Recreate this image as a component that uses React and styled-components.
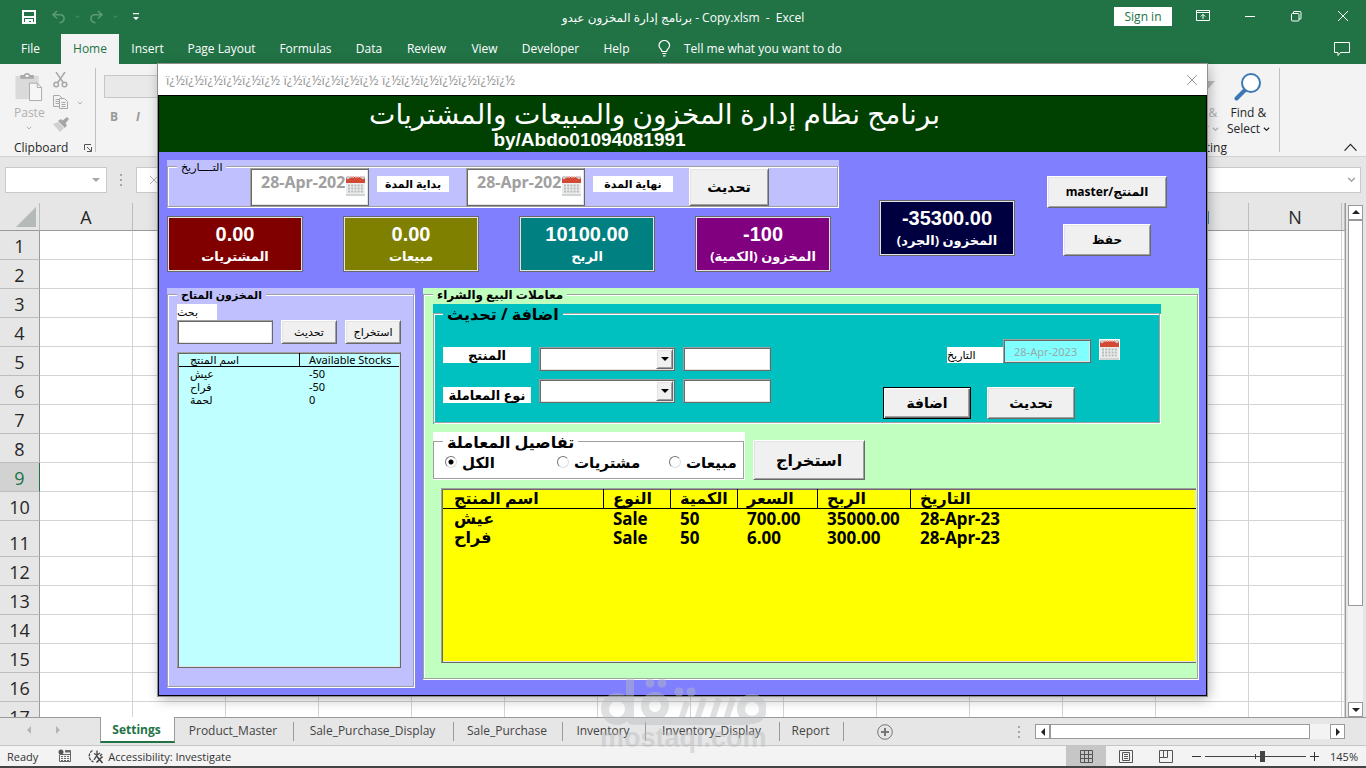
/* eslint-disable react/prop-types */
import { useState } from 'react'
import styled, { createGlobalStyle, css } from 'styled-components'

const GlobalStyle = createGlobalStyle`
  * {
    box-sizing: border-box;
  }
  html, body, #root {
    height: 100%;
  }
  body {
    margin: 0;
    overflow: hidden;
    font-family: "Open Sans", "Noto Sans", "DejaVu Sans", sans-serif;
    font-size: 12px;
    color: #262626;
  }
  button, input, select {
    font: inherit;
    color: inherit;
    margin: 0;
    border-radius: 0;
  }
  button {
    padding: 0;
    border: 0;
    background: none;
    white-space: nowrap;
  }
  svg {
    display: block;
    flex: none;
  }
`

const formFont = css`
  font-family: "Noto Sans", "DejaVu Sans", sans-serif;
`

const raised = css`
  background: #f0f0f0;
  border: 1px solid;
  border-color: #fff #696969 #696969 #fff;
  box-shadow: inset 1px 1px 0 #e3e3e3, inset -1px -1px 0 #a0a0a0;
`

const sunken = css`
  border: 1px solid;
  border-color: #a0a0a0 #696969 #696969 #a0a0a0;
  box-shadow: inset 1px 1px 0 #696969, inset -1px -1px 0 #e3e3e3;
`

/* ---------- workbook window ---------- */

const Window = styled.div`
  position: relative;
  height: 100%;
  display: flex;
  flex-direction: column;
  background: #e6e6e6;
  border-bottom: 2px solid #444;
`

const TitleBar = styled.header`
  display: grid;
  grid-template-columns: 1fr auto 1fr;
  align-items: center;
  height: 34px;
  flex: none;
  background: #217346;
  color: #fff;
`

const QuickAccess = styled.div`
  display: flex;
  align-items: center;
  gap: 9px;
  padding-left: 21px;
  color: #5c9a78;
  & button:first-child {
    color: #fff;
    margin-right: 5px;
  }
  & button:last-child {
    color: #fff;
    margin-left: 6px;
  }
`

const FileName = styled.div`
  white-space: pre;
`

const WindowButtons = styled.div`
  display: flex;
  justify-content: flex-end;
  align-items: center;
  padding: 0 17px 2px 0;
  gap: 35px;
`

const SignIn = styled.button`
  width: 58px;
  height: 19px;
  background: #fff;
  color: #217346;
  margin-right: -11px;
`

const RibbonTabs = styled.nav`
  display: flex;
  align-items: stretch;
  height: 30px;
  flex: none;
  background: #217346;
  color: #fff;
  padding-right: 15px;
`

const RibbonTab = styled.button`
  width: ${p => p.$w}px;
  padding-bottom: 1px;
  background: ${p => (p.$active ? '#f3f3f3' : 'transparent')};
  color: ${p => (p.$active ? '#217346' : '#fff')};
`

const TellMe = styled.button`
  display: flex;
  align-items: center;
  gap: 13px;
  padding: 0 0 1px 16px;
  margin-right: auto;
`

const Ribbon = styled.div`
  display: flex;
  height: 93px;
  flex: none;
  background: #f3f3f3;
  border-bottom: 1px solid #d2d2d2;
  color: #262626;
`

const RibbonGroup = styled.section`
  display: flex;
  flex-direction: column;
  justify-content: space-between;
  width: ${p => p.$w}px;
  margin: 4px 0;
  padding: 4px 0 0 14px;
  border-right: 1px solid #c0c0c0;
`

const GroupTools = styled.div`
  display: flex;
  gap: 8px;
  color: #a8a8a8;
`

const BigTool = styled.button`
  display: flex;
  flex-direction: column;
  align-items: center;
  line-height: 16px;
  color: ${p => (p.$on ? '#262626' : '#b0b0b0')};
  & span {
    display: flex;
    align-items: center;
    gap: 3px;
  }
  & > svg:first-child {
    height: 30px;
    margin-bottom: 3px;
  }
  & > svg:last-child {
    margin-top: 5px;
  }
`

const ToolStack = styled.div`
  display: flex;
  flex-direction: column;
  align-self: flex-start;
  gap: 7px;
  & div {
    display: flex;
    align-items: center;
    gap: 8px;
  }
`

const GroupName = styled.div`
  display: flex;
  align-items: center;
  gap: 16px;
  line-height: 16px;
  margin-bottom: -4px;
`

const FontTools = styled.div`
  display: flex;
  flex-direction: column;
  gap: 10px;
  padding: 11px 0 0 8px;
  color: #999;
  & input {
    width: 120px;
    height: 23px;
    background: #e9e9e9;
    border: 1px solid #c6c6c6;
  }
  & div {
    display: flex;
    gap: 18px;
    padding-left: 6px;
  }
`

const EditingGroup = styled(RibbonGroup)`
  margin-left: auto;
  padding-right: 9px;
  align-items: flex-end;
  & ${GroupName} {
    margin-right: 43px;
  }
`

const Collapse = styled.button`
  align-self: flex-end;
  width: 86px;
  display: flex;
  justify-content: flex-end;
  padding: 0 8px 5px 0;
`

const FormulaBar = styled.div`
  display: flex;
  align-items: center;
  gap: 13px;
  height: 46px;
  flex: none;
  padding: 0 5px;
  color: #a6a6a6;
`

const NameBox = styled.div`
  display: flex;
  align-items: center;
  width: 102px;
  height: 26px;
  padding-right: 6px;
  background: #fff;
  border: 1px solid #c9c9c9;
  & input {
    min-width: 0;
    flex: 1;
    border: 0;
  }
`

const FormulaBox = styled(NameBox)`
  flex: 1;
  padding: 0 4px 0 12px;
`

const Body = styled.div`
  display: flex;
  flex: 1;
  min-height: 0;
`

const GridArea = styled.div`
  flex: 1;
  min-width: 0;
  overflow: hidden;
  border-right: 1px solid #9a9a9a;
`

const Sheet = styled.table`
  table-layout: fixed;
  width: 100%;
  border-collapse: separate;
  border-spacing: 0;
  background: #fff;
  & th {
    padding: 0;
    background: #e6e6e6;
    font-weight: 400;
    font-size: 18px;
    color: #262626;
    line-height: 26px;
    vertical-align: bottom;
  }
  & thead th {
    height: 28px;
    border-right: 1px solid #bdbdbd;
    border-bottom: 1px solid #9a9a9a;
  }
  & td {
    border-right: 1px solid #d4d4d4;
    border-bottom: 1px solid #d4d4d4;
  }
`

const Corner = styled.th`
  width: 40px;
  & svg {
    margin: 0 0 3px 16px;
  }
`

const ColHead = styled.th`
  width: 93px;
`

const RowHead = styled.th`
  height: ${p => p.$h}px;
  border-right: 1px solid #9a9a9a;
  border-bottom: 1px solid #bdbdbd;
  ${p =>
    p.$active &&
    css`
      && {
        background: #d2d2d2;
        color: #217346;
        border-right-color: #217346;
      }
    `}
`

const VScroll = styled.div`
  display: flex;
  flex-direction: column;
  width: 20px;
  padding: 2px 3px 0 2px;
`

const ScrollButton = styled.button`
  display: flex;
  align-items: center;
  justify-content: center;
  width: 15px;
  height: 15px;
  flex: none;
  background: #fff;
  border: 1px solid #999;
  color: #222;
`

const Track = styled.div`
  display: flex;
  flex: 1;
  background: #f3f3f3;
  & div {
    flex-basis: ${p => p.$size}%;
    background: #fff;
    border: 1px solid #999;
  }
  flex-direction: ${p => (p.$vertical ? 'column' : 'row')};
`

const SheetBar = styled.div`
  display: flex;
  align-items: stretch;
  height: 29px;
  flex: none;
  padding-right: 21px;
  border-top: 1px solid #9a9a9a;
  border-bottom: 1px solid #c6c6c6;
  background: #e6e6e6;
`

const SheetNav = styled.div`
  display: flex;
  align-items: center;
  justify-content: center;
  gap: 21px;
  width: 100px;
  padding: 0 14px 3px 0;
  color: #b5b5b5;
`

const SheetTab = styled.button`
  width: ${p => p.$w}px;
  margin: 4px 0;
  padding: 0 2px 2px 0;
  border-right: 1px solid #9a9a9a;
  color: #444;
  ${p =>
    p.$active &&
    css`
      margin: -1px 0 2px;
      padding-bottom: 0;
      background: #fff;
      color: #217346;
      font-weight: 700;
      border-left: 1px solid #9a9a9a;
      border-bottom: 2px solid #217346;
    `}
`

const NewSheet = styled.button`
  margin: 0 auto 0 33px;
  color: #777;
`

const HScroll = styled.div`
  display: flex;
  align-items: center;
  width: 327px;
  color: #a6a6a6;
  & ${Track} {
    height: 15px;
  }
  & > svg {
    margin-right: 14px;
  }
`

const StatusBar = styled.footer`
  display: flex;
  align-items: center;
  height: 20px;
  flex: none;
  padding: 0 8px 0 7px;
  background: #f3f3f3;
  font-size: 11px;
  color: #333;
  & > svg {
    margin: 0 17px 0 20px;
  }
`

const Access = styled.button`
  display: flex;
  align-items: center;
  gap: 4px;
  margin-right: auto;
`

const ViewButton = styled.button`
  display: flex;
  justify-content: center;
  align-items: center;
  width: 40px;
  height: 20px;
  color: #555;
  background: ${p => (p.$active ? '#c6c6c6' : 'transparent')};
`

const Zoom = styled.div`
  display: flex;
  align-items: center;
  gap: 4px;
  margin-left: 6px;
  & output {
    width: 35px;
    text-align: right;
  }
  & input {
    appearance: none;
    width: 101px;
    height: 12px;
    background:
      linear-gradient(#444, #444) center / 100% 1px no-repeat,
      linear-gradient(#444, #444) center / 1px 5px no-repeat;
  }
  & input::-webkit-slider-thumb {
    appearance: none;
    width: 5px;
    height: 11px;
    background: #444;
  }
`

/* ---------- form window ---------- */

const Form = styled.section`
  position: absolute;
  top: 64px;
  left: 158px;
  right: 159px;
  display: flex;
  flex-direction: column;
  box-shadow: 0 0 0 1px #8f8f8f, 2px 3px 12px rgba(0, 0, 0, 0.3);
  color: #000;
  ${formFont}
`

const FormTitle = styled.div`
  display: flex;
  align-items: center;
  justify-content: space-between;
  height: 31px;
  padding: 0 9px 0 8px;
  background: #fff;
  color: #999;
  font-size: 13px;
`

const FormBody = styled.div`
  border: 1px solid #000;
  background: #8080ff;
`

const Banner = styled.div`
  display: flex;
  flex-direction: column;
  align-items: center;
  height: 56px;
  background: #004000;
  color: #fff;
  padding-right: 56px;
  & h1 {
    margin: 0;
    font-size: 28px;
    line-height: 34px;
    font-weight: 400;
    white-space: nowrap;
  }
  & p {
    margin: 0;
    padding-right: 130px;
    font: bold 19px/20px "Liberation Sans", Arial, sans-serif;
  }
`

const FormContent = styled.div`
  display: flex;
  flex-direction: column;
  gap: 16px;
  padding: 8px 7px 7px 8px;
`

const TopRow = styled.div`
  display: flex;
`

const Summary = styled.div`
  display: flex;
  flex-direction: column;
  gap: 8px;
  width: 672px;
`

const Panel = styled.div`
  display: flex;
  padding-top: ${p => p.$top || 6}px;
  width: ${p => (p.$w ? `${p.$w}px` : 'auto')};
  height: ${p => p.$h}px;
  flex: ${p => (p.$grow ? 1 : 'none')};
  min-width: 0;
  background: ${p => p.$bg};
`

const Frame = styled.fieldset`
  position: relative;
  flex: 1;
  min-width: 0;
  margin: 0 1px 1px 0;
  padding: ${p => p.$pad || '0'};
  border: 1px solid #a0a0a0;
  box-shadow: 1px 1px 0 #fff, inset 1px 1px 0 #fff;
`

const Legend = styled.legend`
  position: absolute;
  top: 0;
  left: 9px;
  transform: translateY(-50%);
  padding: 0 4px;
  background: ${p => p.$bg};
  font-size: ${p => p.$size}px;
  font-weight: ${p => (p.$bold ? 700 : 400)};
  line-height: ${p => (p.$size > 12 ? 18 : 12)}px;
  white-space: nowrap;
`

const DateRow = styled.div`
  display: flex;
  align-items: flex-start;
  padding: 1px 0 0 82px;
`

const DateBox = styled.div`
  position: relative;
  width: 119px;
  & input {
    ${sunken}
    display: block;
    width: 100%;
    height: 38px;
    padding: 0 0 10px 10px;
    background: #fff;
    font-size: 16px;
    font-weight: 700;
    color: #a0a0a0;
  }
  & svg {
    position: absolute;
    right: 3px;
    top: 7px;
  }
`

const Tag = styled.label`
  display: block;
  width: ${p => p.$w}px;
  height: 16px;
  margin: ${p => p.$m || '0'};
  background: #fff;
  font-size: ${p => p.$size || 11}px;
  font-weight: ${p => (p.$plain ? 400 : 700)};
  line-height: 16px;
  text-align: ${p => (p.$plain ? 'left' : 'center')};
  white-space: nowrap;
`

const FormButton = styled.button`
  ${raised}
  width: ${p => p.$w}px;
  height: ${p => p.$h || 32}px;
  font-size: ${p => p.$size || 14}px;
  font-weight: ${p => (p.$bold ? 700 : 400)};
  line-height: 20px;
  ${p =>
    p.$default &&
    css`
      border-color: #000;
      box-shadow: inset 1px 1px 0 #fff, inset -1px -1px 0 #696969, inset -2px -2px 0 #a0a0a0;
    `}
`

const Cards = styled.div`
  display: flex;
  gap: 40px;
`

const CardBox = styled.div`
  display: flex;
  flex-direction: column;
  align-items: center;
  width: 136px;
  height: 56px;
  padding-top: 6px;
  border: 1px solid #696969;
  box-shadow: inset 0 0 0 1px #e3e3e3;
  background: ${p => p.$bg};
  color: #fff;
  font-weight: 700;
  & strong {
    font: bold 20px/22px "Liberation Sans", Arial, sans-serif;
  }
  & span {
    font-size: 13px;
    line-height: 22px;
    white-space: nowrap;
  }
`

const Net = styled.div`
  padding: 40px 32px 0 40px;
`

const SideButtons = styled.div`
  display: flex;
  flex-direction: column;
  align-items: center;
  gap: 16px;
  padding-top: 16px;
`

const BottomRow = styled.div`
  display: flex;
  align-items: flex-start;
  gap: 8px;
`

const SearchRow = styled.div`
  display: flex;
  gap: 8px;
  margin-bottom: 8px;
`

const TextBox = styled.input`
  ${sunken}
  width: ${p => p.$w}px;
  height: 24px;
  padding: 0 4px;
  background: #fff;
`

const List = styled.div`
  ${sunken}
  height: ${p => p.$h}px;
  padding: 0 1px;
  background: ${p => p.$bg};
  overflow: hidden;
`

const StockTable = styled.table`
  width: 100%;
  border-collapse: separate;
  border-spacing: 0;
  table-layout: fixed;
  font-size: 11px;
  & th,
  & td {
    padding: 0 0 0 9px;
    height: 13px;
    line-height: 13px;
    font-weight: 400;
    text-align: left;
    white-space: nowrap;
  }
  & th:first-child,
  & td:first-child {
    padding-left: 11px;
  }
  & th {
    border-bottom: 1px solid #000;
  }
  & th:first-child {
    width: 121px;
    border-right: 1px solid #000;
  }
`

const DealTable = styled(StockTable)`
  font-size: 17px;
  & th,
  & td {
    height: 19px;
    line-height: 19px;
    font-weight: 700;
  }
  & th,
  & td:first-child {
    font-size: 16px;
  }
  & th:not(:last-child) {
    border-right: 1px solid #000;
  }
  & th:first-child {
    width: ${p => p.$first}px;
  }
`

const DealHead = styled.th`
  width: ${p => (p.$w ? `${p.$w}px` : 'auto')};
`

const EntryRow = styled.div`
  display: flex;
  justify-content: space-between;
  padding: 25px 39px 0 9px;
`

const EntryFields = styled.div`
  display: grid;
  grid-template-columns: 88px 136px 88px;
  align-content: start;
  gap: 8px;
  padding-top: 8px;
  & label:nth-of-type(2) {
    align-self: end;
  }
`

const Combo = styled.div`
  ${sunken}
  display: flex;
  position: relative;
  height: 24px;
  background: #fff;
  & select {
    appearance: none;
    flex: 1;
    margin: 2px;
    border: 0;
    background: #fff;
  }
  & span {
    ${raised}
    position: absolute;
    top: 1px;
    right: 1px;
    bottom: 1px;
    width: 17px;
    display: flex;
    align-items: center;
    justify-content: center;
    pointer-events: none;
  }
`

const EntryActions = styled.div`
  display: flex;
  flex-direction: column;
  gap: 24px;
  width: 237px;
`

const EntryDate = styled.div`
  display: flex;
  justify-content: flex-end;
  height: 24px;
  & label {
    align-self: flex-end;
  }
  & input {
    background: #80ffff;
    color: #9aa;
    font-size: 11px;
    padding: 0 10px;
  }
  & svg {
    margin-left: 8px;
  }
`

const Buttons = styled.div`
  display: flex;
  gap: 16px;
`

const FilterRow = styled.div`
  display: flex;
  align-items: flex-end;
  gap: 8px;
  margin: 8px 0;
`

const Radios = styled.div`
  display: grid;
  grid-template-columns: repeat(3, 112px);
  padding: 10px 0 0 11px;
`

const Radio = styled.label`
  display: flex;
  align-items: center;
  gap: 5px;
  font-size: 15px;
  font-weight: 700;
  line-height: 20px;
  white-space: nowrap;
  & input {
    appearance: none;
    width: 12px;
    height: 12px;
    border-radius: 50%;
    border: 1px solid;
    border-color: #777 #ddd #ddd #777;
    background: #fff;
  }
  & input:checked {
    background: radial-gradient(#000 0 2px, #fff 3px);
  }
`

const DealList = styled.div`
  margin: 0 1px 0 8px;
  & ${List} {
    border-right: 0;
    padding: 0 0 0 1px;
  }
`

const Watermark = styled.div`
  position: absolute;
  left: 600px;
  bottom: 14px;
  width: 166px;
  color: #b9bcbf;
  opacity: 0.45;
  pointer-events: none;
  text-align: center;
  font: bold 27px/27px "Liberation Sans", Arial, sans-serif;
`

/* ---------- drawings ---------- */

const Chevron = ({ size = 7, up }) => (
  <svg width={size} height={size / 2 + 1} viewBox="0 0 8 5" fill="none" stroke="currentColor" strokeWidth={up ? 0.7 : 1.3}>
    <path d={up ? 'M.5 4.5 4 .8l3.500 3.700' : 'M1 .8l3 3 3-3'} />
  </svg>
)

const arrows = {
  up: 'M0 5 4 1l4 4z',
  down: 'M0 2h8L4 6z',
  left: 'M6 0v8L2 4z',
  right: 'M2 0l4 4-4 4z'
}

const Arrow = ({ dir, size = 8 }) => (
  <svg width={size} height={size} viewBox="0 0 8 8" fill="currentColor">
    <path d={arrows[dir]} />
  </svg>
)

const Dots = () => (
  <svg width="3" height="12" viewBox="0 0 3 12" fill="currentColor">
    <path d="M0 0h2v2H0zM0 5h2v2H0zM0 10h2v2H0z" />
  </svg>
)

const SaveIcon = () => (
  <svg width="16" height="16" viewBox="0 0 16 16" fill="none" stroke="currentColor" strokeWidth="2">
    <path d="M2 2h12v12H2zM2 8h12M5 14v-3h6v3" />
    <path d="M7 12v2" />
  </svg>
)

const UndoIcon = ({ flip }) => (
  <svg width="15" height="14" viewBox="0 0 15 14" fill="none" stroke="currentColor" strokeWidth="1.6">
    <g transform={flip ? 'translate(15 0) scale(-1 1)' : undefined}>
      <path d="M6 1 2 4.800l4 3.700M2 4.800h7c5.500 0 5.500 7-.5 8" />
    </g>
  </svg>
)

const CustomizeIcon = () => (
  <svg width="7" height="8" viewBox="0 0 7 8" fill="currentColor">
    <path d="M0 0h6v1.300H0zM0 4h6L3 7z" />
  </svg>
)

const RibbonOptionsIcon = () => (
  <svg width="14" height="12" viewBox="0 0 14 12" fill="none" stroke="currentColor">
    <path d="M.5.5h13v10H.5zM.5 2.500h13M7 9V4.500M4.800 6.500 7 4.300l2.200 2.200" />
  </svg>
)

const MinimizeIcon = () => (
  <svg width="11" height="11" viewBox="0 0 11 11" stroke="currentColor">
    <path d="M0 5.500h10" />
  </svg>
)

const RestoreIcon = () => (
  <svg width="11" height="11" viewBox="0 0 11 11" fill="none" stroke="currentColor">
    <rect x=".5" y="2.500" width="7.500" height="7.500" rx="1" />
    <path d="M2.500 2.500V1q0-.5.5-.5h6q1 0 1 1v6q0 .5-.5.500H8" />
  </svg>
)

const CloseIcon = ({ size = 12 }) => (
  <svg width={size} height={size} viewBox="0 0 12 12" stroke="currentColor" fill="none">
    <path d="M1 1l10 10M11 1 1 11" />
  </svg>
)

const BulbIcon = () => (
  <svg width="13" height="17" viewBox="0 0 13 17" fill="none" stroke="currentColor" strokeWidth="1.200">
    <path d="M4 11.500C4 9 1 8.500 1 5.500a5.300 5 0 0 1 10.600 0C11.600 8.500 8.600 9 8.600 11.500zM4.300 13.500h4M5 15.800h2.600" />
  </svg>
)

const CommentIcon = () => (
  <svg width="17" height="16" viewBox="0 0 17 16" fill="none" stroke="currentColor">
    <path d="M.5 1.500h15v10h-9l-2.500 3v-3H.5z" />
  </svg>
)

const PasteIcon = () => (
  <svg width="28" height="31" viewBox="0 0 28 31" fill="none">
    <path d="M0 4h24v24H0z" fill="#dadada" />
    <path d="M5 7V3h4q0-2 3-2t3 2h4v4z" fill="#a8aaaa" />
    <path d="M10.500 3h3v2h-3z" fill="#fff" />
    <path d="M14.500 11.500h8l4.500 4.500v13.500H14.500z" fill="#f6f6f6" stroke="#aaa" />
    <path d="M22.500 11.500V16H27" stroke="#aaa" />
  </svg>
)

const CutIcon = () => (
  <svg width="15" height="16" viewBox="0 0 15 16" fill="none" stroke="currentColor" strokeWidth="1.500">
    <path d="M3 0l7.500 11M12 0 4.500 11" />
    <circle cx="3.200" cy="12.500" r="2.300" />
    <circle cx="11.500" cy="12.500" r="2.300" />
  </svg>
)

const CopyIcon = () => (
  <svg width="16" height="15" viewBox="0 0 16 15" fill="#f3f3f3" stroke="currentColor">
    <path d="M.5.500h6L9 3v8.500H.5zM2.500 4.500h4M2.500 6.500h4M2.500 8.500h4" />
    <path d="M6.500 3.500h5l3 3v7h-8zM8.500 7.500h4M8.500 9.500h4M8.500 11.500h4" />
  </svg>
)

const BrushIcon = () => (
  <svg width="16" height="15" viewBox="0 0 16 15">
    <path d="M0 7l5-2 6 6-4 4z" fill="#cfcfcf" />
    <path d="M5 4l3-2 6 6-2 3zM9 4l5-4 2 2-4 5z" fill="#a5a5a5" />
  </svg>
)

const LauncherIcon = () => (
  <svg width="8" height="8" viewBox="0 0 8 8" fill="none" stroke="#555">
    <path d="M.5 6V.5H7M3 3l4 4M7.500 3v4.500H3" />
  </svg>
)

const FilterIcon = () => (
  <svg width="30" height="28" viewBox="0 0 30 28" fill="#bcbcbc">
    <path d="M10 8h20l-8 9v7l-4-3v-4z" />
  </svg>
)

const FindIcon = () => (
  <svg width="28" height="28" viewBox="0 0 28 28" fill="#fff" stroke="#3b78b4">
    <path d="M11 17 2.500 25.500" strokeWidth="4" strokeLinecap="round" />
    <circle cx="17" cy="10" r="9" strokeWidth="2" />
  </svg>
)

const CalendarIcon = () => (
  <svg width="21" height="22" viewBox="0 0 21 22">
    <path d="M0 0h21v21H0z" fill="#fff" />
    <path d="M1 2h19v6H1z" fill="#d24a35" />
    <path d="M1 8h19v11H1z" fill="#ececec" />
    <path d="M1 19h19v2H1z" fill="#cfd4d4" />
    <path d="M3 10.500h15M3 13.500h15M3 16.500h15" stroke="#b9bcbc" strokeWidth="2" strokeDasharray="2 1.200" />
    <path d="M5 2h11" stroke="#e8b0a6" strokeWidth="2" strokeDasharray="1.500 1" />
    <circle cx="3" cy="2.500" r="1.800" fill="#c8cccc" />
    <circle cx="18" cy="2.500" r="1.800" fill="#c8cccc" />
  </svg>
)

const MacroIcon = () => (
  <svg width="13" height="14" viewBox="0 0 13 14" fill="none" stroke="#666">
    <path d="M1.500 6v6.500h11V1.500H7M1.500 5.500h11" />
    <path d="M3 7.500h8M3 9.500h8M3 11.500h8" strokeDasharray="2 1" />
    <path d="M7 2.500h5" strokeWidth="2" />
    <circle cx="3" cy="3" r="2.500" fill="#555" stroke="none" />
  </svg>
)

const AccessIcon = () => (
  <svg width="16" height="15" viewBox="0 0 16 15" fill="none" stroke="#444">
    <path d="M4.500 1.500A6.300 6.300 0 0 0 5.500 13" strokeDasharray="3 1" strokeWidth="1.300" />
    <path d="M6 4.500 9 6l3-2M9 1.500V6L6 11M12 7l2-2" strokeWidth="1.300" />
    <path d="m8.500 7 6 7M14.500 7.500l-6 6" strokeWidth="1.600" />
  </svg>
)

const GridIcon = () => (
  <svg width="13" height="13" viewBox="0 0 13 13" fill="none" stroke="currentColor">
    <path d="M.5.500h12v12H.5zM4.500.500v12M8.500.500v12M.5 4.500h12M.5 8.500h12" />
  </svg>
)

const PageIcon = () => (
  <svg width="14" height="13" viewBox="0 0 14 13" fill="none" stroke="currentColor">
    <path d="M.5.500h13v12H.5zM3.500 2.500h7v8h-7zM5 4.500h4M5 6.500h4M5 8.500h4" />
  </svg>
)

const BreakIcon = () => (
  <svg width="14" height="13" viewBox="0 0 14 13" fill="none" stroke="currentColor">
    <path d="M.5.500h13v12H.5zM.5 7.500h8v-7M4.500.500v7" />
  </svg>
)

const PlusIcon = () => (
  <svg width="16" height="16" viewBox="0 0 16 16" fill="none" stroke="currentColor">
    <circle cx="8" cy="8" r="7.300" />
    <path d="M8 4v8M4 8h8" strokeWidth="2" />
  </svg>
)

const WatermarkLogo = () => (
  <svg width="166" height="49" viewBox="0 0 166 49" fill="none" stroke="currentColor" strokeWidth="8">
    <circle cx="17" cy="33" r="12" />
    <path d="M30 2v38q0 5 5 5h108q6 0 8-2" />
    <circle cx="55" cy="30" r="10" />
    <circle cx="152" cy="33" r="11" />
    <path d="M87 26l-6 18M104 22l-7 22M119 22l-7 22M133 22l-7 22" strokeWidth="6" />
    <g fill="currentColor" stroke="none">
      <circle cx="50" cy="7" r="4.500" />
      <circle cx="62" cy="7" r="4.500" />
      <circle cx="79" cy="16" r="4.500" />
      <circle cx="91" cy="16" r="4.500" />
    </g>
  </svg>
)

/* ---------- data ---------- */

const ribbonTabs = [
  ['File', 61],
  ['Home', 58],
  ['Insert', 57],
  ['Page Layout', 91],
  ['Formulas', 77],
  ['Data', 50],
  ['Review', 65],
  ['View', 51],
  ['Developer', 81],
  ['Help', 51]
]

const columns = 'ABCDEFGHIJKLMN'.split('')
const rows = Array.from({ length: 17 }, (_, i) => i + 1)

const sheets = [
  ['Settings', 75],
  ['Product_Master', 119],
  ['Sale_Purchase_Display', 160],
  ['Sale_Purchase', 109],
  ['Inventory', 83],
  ['Inventory_Display', 134],
  ['Report', 64]
]

const cards = [
  { value: '0.00', name: 'المشتريات', bg: '#800000' },
  { value: '0.00', name: 'مبيعات', bg: '#808000' },
  { value: '10100.00', name: 'الربح', bg: '#008080' },
  { value: '-100', name: 'المخزون (الكمية)', bg: '#800080' }
]

const stock = [
  ['عيش', '-50'],
  ['فراح', '-50'],
  ['لحمة', '0']
]

const dealColumns = [
  ['اسم المنتج', 160],
  ['النوع', 67],
  ['الكمية', 67],
  ['السعر', 80],
  ['الربح', 93],
  ['التاريخ']
]

const deals = [
  ['عيش', 'Sale', '50', '700.00', '35000.00', '28-Apr-23'],
  ['فراح', 'Sale', '50', '6.00', '300.00', '28-Apr-23']
]

const filters = ['الكل', 'مشتريات', 'مبيعات']

const broken = n => 'ï¿½'.repeat(n)

/* ---------- parts ---------- */

const Group = ({ title, size, bold, bg, pad, children, ...panel }) => (
  <Panel $bg={bg} {...panel}>
    <Frame $pad={pad}>
      <Legend $bg={bg} $size={size} $bold={bold}>{title}</Legend>
      {children}
    </Frame>
  </Panel>
)

const Card = ({ value, name, bg }) => (
  <CardBox $bg={bg}>
    <strong>{value}</strong>
    <span>{name}</span>
  </CardBox>
)

const DateField = ({ id }) => (
  <DateBox>
    <input id={id} defaultValue="28-Apr-2023" readOnly />
    <CalendarIcon />
  </DateBox>
)

const ComboBox = ({ id }) => (
  <Combo>
    <select id={id} />
    <span><Arrow dir="down" /></span>
  </Combo>
)

const Header = () => (
  <>
    <TitleBar>
      <QuickAccess>
        <button aria-label="Save"><SaveIcon /></button>
        <button aria-label="Undo"><UndoIcon /></button>
        <Chevron size={5} />
        <button aria-label="Redo"><UndoIcon flip /></button>
        <Chevron size={5} />
        <button aria-label="Customize"><CustomizeIcon /></button>
      </QuickAccess>
      <FileName>{'برنامج إدارة المخزون عبدو - Copy.xlsm  -  Excel'}</FileName>
      <WindowButtons>
        <SignIn>Sign in</SignIn>
        <button aria-label="Ribbon options"><RibbonOptionsIcon /></button>
        <button aria-label="Minimize"><MinimizeIcon /></button>
        <button aria-label="Restore"><RestoreIcon /></button>
        <button aria-label="Close"><CloseIcon /></button>
      </WindowButtons>
    </TitleBar>
    <RibbonTabs>
      {ribbonTabs.map(([name, w]) => (
        <RibbonTab key={name} $w={w} $active={name === 'Home'}>{name}</RibbonTab>
      ))}
      <TellMe><BulbIcon />Tell me what you want to do</TellMe>
      <button aria-label="Comments"><CommentIcon /></button>
    </RibbonTabs>
    <Ribbon>
      <RibbonGroup $w={96}>
        <GroupTools>
          <BigTool><PasteIcon />Paste<Chevron size={6} /></BigTool>
          <ToolStack>
            <CutIcon />
            <div><CopyIcon /><Chevron size={6} /></div>
            <BrushIcon />
          </ToolStack>
        </GroupTools>
        <GroupName>Clipboard <LauncherIcon /></GroupName>
      </RibbonGroup>
      <FontTools>
        <input aria-label="Font" readOnly />
        <div><b>B</b><b><i>I</i></b></div>
      </FontTools>
      <EditingGroup $w={150}>
        <GroupTools>
          <BigTool><FilterIcon />Sort &amp;<span>Filter <Chevron /></span></BigTool>
          <BigTool $on><FindIcon />Find &amp;<span>Select <Chevron /></span></BigTool>
        </GroupTools>
        <GroupName>Editing</GroupName>
      </EditingGroup>
      <Collapse aria-label="Collapse ribbon"><Chevron size={15} up /></Collapse>
    </Ribbon>
    <FormulaBar>
      <NameBox>
        <input aria-label="Name box" />
        <Arrow dir="down" />
      </NameBox>
      <Dots />
      <FormulaBox>
        <CloseIcon size={10} />
        <input aria-label="Formula" />
        <Chevron size={9} />
      </FormulaBox>
    </FormulaBar>
  </>
)

const Grid = () => (
  <Body>
    <GridArea>
      <Sheet>
        <thead>
          <tr>
            <Corner>
              <svg width="20" height="20" viewBox="0 0 20 20"><path d="M20 0v20H0z" fill="#b5bab8" /></svg>
            </Corner>
            {columns.map(c => <ColHead key={c}>{c}</ColHead>)}
            <th />
          </tr>
        </thead>
        <tbody>
          {rows.map(r => (
            <tr key={r}>
              <RowHead $h={r === 11 ? 36 : 29} $active={r === 9}>{r}</RowHead>
              {columns.map(c => <td key={c} />)}
              <td />
            </tr>
          ))}
        </tbody>
      </Sheet>
    </GridArea>
    <VScroll>
      <ScrollButton aria-label="Up"><Arrow dir="up" /></ScrollButton>
      <Track $vertical $size={80}><div /></Track>
      <ScrollButton aria-label="Down"><Arrow dir="down" /></ScrollButton>
    </VScroll>
  </Body>
)

const Footer = () => {
  const [zoom, setZoom] = useState(57)

  return (
    <>
      <SheetBar>
        <SheetNav><Arrow dir="left" /><Arrow dir="right" /></SheetNav>
        {sheets.map(([name, w]) => (
          <SheetTab key={name} $w={w} $active={name === 'Settings'}>{name}</SheetTab>
        ))}
        <NewSheet aria-label="New sheet"><PlusIcon /></NewSheet>
        <HScroll>
          <Dots />
          <ScrollButton aria-label="Left"><Arrow dir="left" /></ScrollButton>
          <Track $size={93}><div /></Track>
          <ScrollButton aria-label="Right"><Arrow dir="right" /></ScrollButton>
        </HScroll>
      </SheetBar>
      <StatusBar>
        Ready
        <MacroIcon />
        <Access><AccessIcon />Accessibility: Investigate</Access>
        <ViewButton $active aria-label="Normal"><GridIcon /></ViewButton>
        <ViewButton aria-label="Page layout"><PageIcon /></ViewButton>
        <ViewButton aria-label="Page break"><BreakIcon /></ViewButton>
        <Zoom>
          <svg width="9" height="9" stroke="#333"><path d="M0 4.500h9" /></svg>
          <input
            type="range"
            aria-label="Zoom"
            value={zoom}
            onChange={e => setZoom(e.target.value)}
          />
          <svg width="9" height="9" stroke="#333"><path d="M0 4.500h9M4.500 0v9" /></svg>
          <output>145%</output>
        </Zoom>
      </StatusBar>
    </>
  )
}

const StockPanel = () => (
  <Group title="المخزون المتاح" size={11} bold bg="#c0c0ff" pad="9px 12px 0 9px" $w={248} $h={400}>
    <Tag $w={40} $plain htmlFor="search">بحث</Tag>
    <SearchRow>
      <TextBox $w={96} id="search" />
      <FormButton $w={56} $h={24} $size={11}>تحديث</FormButton>
      <FormButton $w={56} $h={24} $size={11}>استخراج</FormButton>
    </SearchRow>
    <List $h={316} $bg="#c0ffff">
      <StockTable>
        <thead>
          <tr>
            <th>اسم المنتج</th>
            <th>Available Stocks</th>
          </tr>
        </thead>
        <tbody>
          {stock.map(([name, count]) => (
            <tr key={name}>
              <td>{name}</td>
              <td>{count}</td>
            </tr>
          ))}
        </tbody>
      </StockTable>
    </List>
  </Group>
)

const DealsPanel = () => {
  const [filter, setFilter] = useState(filters[0])

  return (
    <Group title="معاملات البيع والشراء" size={12} bold bg="#c0ffc0" pad="9px 0 0 9px" $grow $h={392}>
      <Group title="اضافة / تحديث" size={16} bold bg="#00c0c0" $w={728} $h={120} $top={9}>
        <EntryRow>
          <EntryFields>
            <Tag $size={13} htmlFor="product">المنتج</Tag>
            <ComboBox id="product" />
            <TextBox aria-label="المنتج" />
            <Tag $size={13} htmlFor="kind">نوع المعاملة</Tag>
            <ComboBox id="kind" />
            <TextBox aria-label="نوع المعاملة" />
          </EntryFields>
          <EntryActions>
            <EntryDate>
              <Tag $w={56} $plain htmlFor="date">التاريخ</Tag>
              <TextBox $w={88} id="date" defaultValue="28-Apr-2023" readOnly />
              <CalendarIcon />
            </EntryDate>
            <Buttons>
              <FormButton $w={88} $bold $default>اضافة</FormButton>
              <FormButton $w={88} $bold>تحديث</FormButton>
            </Buttons>
          </EntryActions>
        </EntryRow>
      </Group>
      <FilterRow>
        <Group title="تفاصيل المعاملة" size={16} bold bg="#fff" $w={312} $h={48} $top={9}>
          <Radios>
            {filters.map(name => (
              <Radio key={name}>
                <input
                  type="radio"
                  name="filter"
                  checked={filter === name}
                  onChange={() => setFilter(name)}
                />
                {name}
              </Radio>
            ))}
          </Radios>
        </Group>
        <FormButton $w={112} $h={40} $size={16} $bold>استخراج</FormButton>
      </FilterRow>
      <DealList>
        <List $h={175} $bg="#ffff00">
          <DealTable $first={161}>
            <thead>
              <tr>
                {dealColumns.map(([name, w]) => <DealHead key={name} $w={w}>{name}</DealHead>)}
              </tr>
            </thead>
            <tbody>
              {deals.map(deal => (
                <tr key={deal[0]}>
                  {deal.map((cell, i) => <td key={i}>{cell}</td>)}
                </tr>
              ))}
            </tbody>
          </DealTable>
        </List>
      </DealList>
    </Group>
  )
}

const InventoryForm = () => (
  <Form>
    <FormTitle>
      {`${broken(6)} ${broken(5)} ${broken(7)}`}
      <button aria-label="Close form"><CloseIcon /></button>
    </FormTitle>
    <FormBody>
      <Banner>
        <h1>برنامج نظام إدارة المخزون والمبيعات والمشتريات</h1>
        <p>by/Abdo01094081991</p>
      </Banner>
      <FormContent>
        <TopRow>
          <Summary>
            <Group title="التــــاريخ" size={11} bg="#c0c0ff" $h={48}>
              <DateRow>
                <DateField id="from" />
                <Tag $w={72} $m="8px 17px 0 8px" htmlFor="from">بداية المدة</Tag>
                <DateField id="to" />
                <Tag $w={80} $m="8px 16px 0 8px" htmlFor="to">نهاية المدة</Tag>
                <FormButton $w={80} $h={38} $bold>تحديث</FormButton>
              </DateRow>
            </Group>
            <Cards>
              {cards.map(card => <Card key={card.name} {...card} />)}
            </Cards>
          </Summary>
          <Net>
            <Card value="-35300.00" name="المخزون (الجرد)" bg="#000040" />
          </Net>
          <SideButtons>
            <FormButton $w={120} $size={12} $bold dir="rtl">المنتج/master</FormButton>
            <FormButton $w={88} $size={12} $bold>حفظ</FormButton>
          </SideButtons>
        </TopRow>
        <BottomRow>
          <StockPanel />
          <DealsPanel />
        </BottomRow>
      </FormContent>
    </FormBody>
  </Form>
)

const App = () => (
  <Window>
    <GlobalStyle />
    <Header />
    <Grid />
    <Footer />
    <InventoryForm />
    <Watermark>
      <WatermarkLogo />
      mostaqi.com
    </Watermark>
  </Window>
)

export default App
